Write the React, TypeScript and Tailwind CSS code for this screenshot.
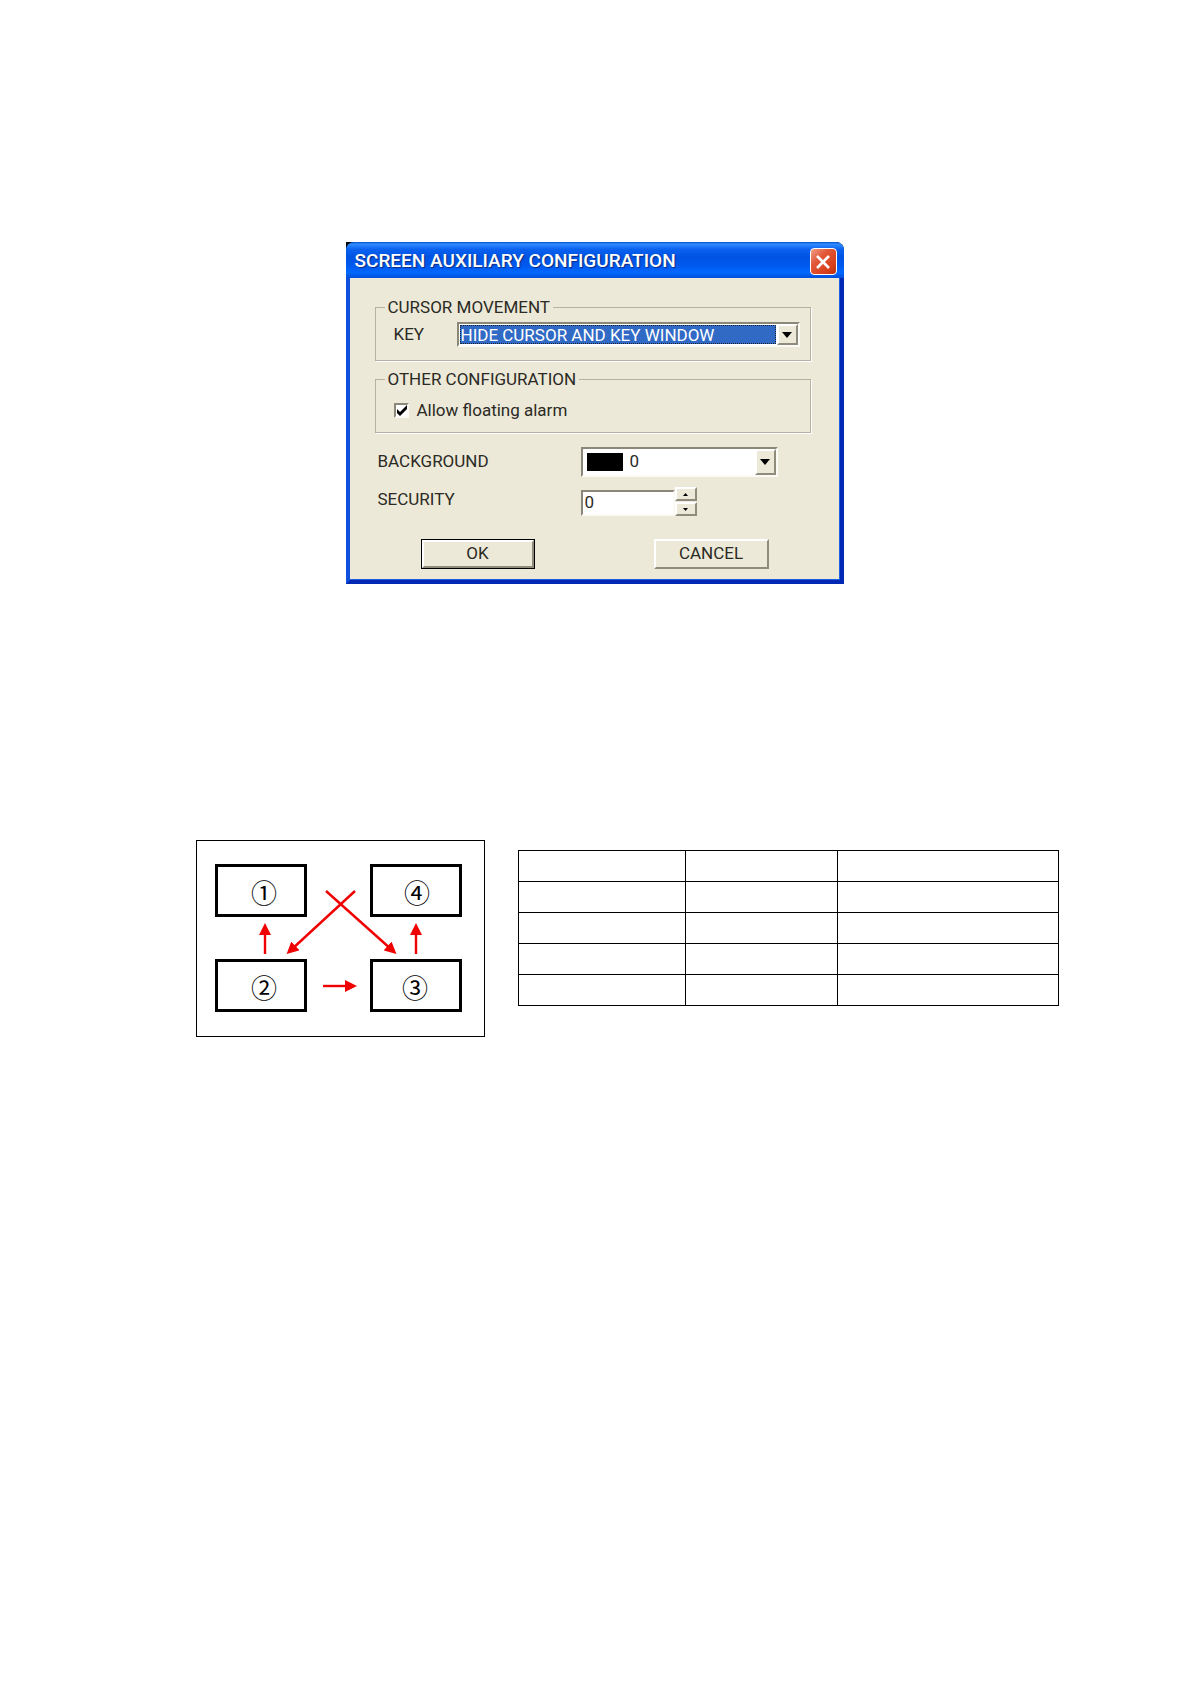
import { useState } from "react";

const raised =
  "bg-[#ece9d8] border-2 border-t-white border-l-white border-b-[#8f8c7d] border-r-[#8f8c7d]";
const sunken =
  "bg-white border-2 border-t-[#8b887a] border-l-[#8b887a] border-b-[#fbfaf5] border-r-[#fbfaf5]";

function Triangle({ up = false, small = false }: { up?: boolean; small?: boolean }) {
  return (
    <svg
      viewBox="0 0 10 6"
      className={small ? "h-[3px] w-[5px]" : "h-[6px] w-[10px]"}
      aria-hidden="true"
    >
      <path d={up ? "M0 6h10L5 0z" : "M0 0h10L5 6z"} fill="#000" />
    </svg>
  );
}

function DropArrow() {
  return (
    <span
      className={`pointer-events-none flex w-[21px] shrink-0 items-center justify-center ${raised}`}
    >
      <Triangle />
    </span>
  );
}

function TitleBar() {
  return (
    <header className="flex h-[36px] items-center justify-between rounded-t-lg bg-[linear-gradient(180deg,#0a50d0_0%,#2f8cff_6%,#0b62f0_20%,#0054e3_40%,#0058ee_65%,#0068ff_85%,#0050d8_100%)] pr-[7px] pl-[9px]">
      <h1 className="pt-[2px] text-[19px] leading-5 font-medium whitespace-nowrap text-white [text-shadow:1px_1px_1px_#0a2a80]">
        SCREEN AUXILIARY CONFIGURATION
      </h1>
      <button
        type="button"
        aria-label="Close"
        className="mt-[3px] flex size-[27px] items-center justify-center rounded border border-white bg-[linear-gradient(135deg,#f0a088_0%,#e2583a_35%,#d8401a_75%,#b83010_100%)]"
      >
        <svg viewBox="0 0 16 16" className="size-4" aria-hidden="true">
          <path d="M2 2l12 12M14 2L2 14" stroke="#fff" strokeWidth="2.6" />
        </svg>
      </button>
    </header>
  );
}

function Group({ title, children }: { title: string; children: React.ReactNode }) {
  return (
    <fieldset className="mr-[5px] h-[64px] border border-[#b5b2a3] pl-[18px] shadow-[1px_1px_0_#fff]">
      <legend className="-ml-[9px] bg-[#ece9d8] px-[3px] leading-5">{title}</legend>
      {children}
    </fieldset>
  );
}

function ConfigDialog() {
  const [floating, setFloating] = useState(true);
  const [security, setSecurity] = useState(0);

  return (
    <section className="w-[498px] max-w-full rounded-tr-lg bg-black text-[17px] leading-5 text-[#2b2a24]">
      <TitleBar />
      <form
        onSubmit={(e) => e.preventDefault()}
        className="border-4 border-t-0 border-r-[#0028b4] border-b-[#0028b4] border-l-[#0f50dc] bg-[#ece9d8] pt-[19px] pr-[24px] pb-[11px] pl-[25px] shadow-[inset_-1px_-1px_0_#2060e0]"
      >
        <Group title="CURSOR MOVEMENT">
          <div className="mt-[5px] flex items-center pr-[10px]">
            <label htmlFor="key" className="w-[63px] shrink-0 pb-[2px]">
              KEY
            </label>
            <div className={`flex h-[25px] min-w-0 flex-1 ${sunken}`}>
              <select
                id="key"
                className="m-[1px] min-w-0 flex-1 appearance-none bg-[#316ac5] pl-px leading-4 text-white outline-1 -outline-offset-1 outline-[#1c2333] outline-dotted"
              >
                <option>HIDE CURSOR AND KEY WINDOW</option>
              </select>
              <DropArrow />
            </div>
          </div>
        </Group>

        <div className="mt-2">
          <Group title="OTHER CONFIGURATION">
            <label className="mt-[11px] flex items-center gap-2">
              <span className="grid">
                <input
                  type="checkbox"
                  checked={floating}
                  onChange={(e) => setFloating(e.target.checked)}
                  className={`col-start-1 row-start-1 size-[15px] appearance-none ${sunken}`}
                />
                {floating && (
                  <svg
                    viewBox="0 0 15 15"
                    className="pointer-events-none col-start-1 row-start-1 size-[15px]"
                    aria-hidden="true"
                  >
                    <path d="M3 6v4l3 3 7-7V2L6 9z" fill="#000" />
                  </svg>
                )}
              </span>
              Allow floating alarm
            </label>
          </Group>
        </div>

        <div className="mt-[14px] flex items-center pl-[3px]">
          <label htmlFor="background" className="w-[203px] shrink-0 pb-[2px]">
            BACKGROUND
          </label>
          <div className={`flex h-[30px] w-[197px] ${sunken}`}>
            <span className="m-1 h-[18px] w-9 shrink-0 bg-black" />
            <select
              id="background"
              className="min-w-0 flex-1 appearance-none bg-white pb-[2px] pl-[3px] outline-none"
            >
              <option>0</option>
            </select>
            <DropArrow />
          </div>
        </div>

        <div className="mt-[10px] flex items-center pl-[3px]">
          <label htmlFor="security" className="w-[203px] shrink-0 pb-[6px]">
            SECURITY
          </label>
          <input
            id="security"
            value={security}
            onChange={(e) => setSecurity(Number(e.target.value) || 0)}
            className={`mt-[2px] h-[26px] w-[94px] pb-[2px] pl-[2px] outline-none ${sunken}`}
          />
          <div className="flex w-[22px] flex-col gap-px">
            <button
              type="button"
              aria-label="Increase"
              onClick={() => setSecurity(security + 1)}
              className={`flex h-[14px] items-center justify-center ${raised}`}
            >
              <Triangle up small />
            </button>
            <button
              type="button"
              aria-label="Decrease"
              onClick={() => setSecurity(Math.max(0, security - 1))}
              className={`flex h-[14px] items-center justify-center ${raised}`}
            >
              <Triangle small />
            </button>
          </div>
        </div>

        <div className="mt-[23px] flex gap-[119px] pl-[46px]">
          <button type="submit" className="h-[30px] w-[114px] border border-black">
            <span className={`flex h-full items-center justify-center pb-[2px] ${raised}`}>OK</span>
          </button>
          <button type="button" className={`h-[30px] w-[115px] pb-[2px] ${raised}`}>
            CANCEL
          </button>
        </div>
      </form>
    </section>
  );
}

const nodes = [
  { label: "①", x: 19, y: 24, cx: 68 },
  { label: "②", x: 19, y: 119, cx: 68 },
  { label: "③", x: 174, y: 119, cx: 219 },
  { label: "④", x: 174, y: 24, cx: 221 },
];

const arrows = [
  "M69 114V89",
  "M220 114V89",
  "M127 146H155",
  "M130 51L196 110",
  "M159 51L95 110",
];

function OrderDiagram() {
  return (
    <figure className="w-[289px] shrink-0 border border-black">
      <svg
        viewBox="1 1 287 195"
        className="block w-full"
        role="img"
        aria-label="Order of movement between windows"
      >
        <defs>
          <marker
            id="head"
            viewBox="0 0 12 12"
            refX="6"
            refY="6"
            markerWidth="12"
            markerHeight="12"
            markerUnits="userSpaceOnUse"
            orient="auto"
          >
            <path d="M0 0L12 6L0 12z" fill="#f00000" />
          </marker>
        </defs>
        {nodes.map((n) => (
          <g key={n.label}>
            <rect
              x={n.x + 1.5}
              y={n.y + 1.5}
              width="89"
              height="50"
              fill="#fff"
              stroke="#000"
              strokeWidth="3"
            />
            <text
              x={n.cx}
              y={n.y + 39}
              textAnchor="middle"
              className="font-['Noto_Sans_CJK_KR',sans-serif] text-[26px]"
            >
              {n.label}
            </text>
          </g>
        ))}
        {arrows.map((d) => (
          <path key={d} d={d} stroke="#f00000" strokeWidth="2.4" markerEnd="url(#head)" />
        ))}
      </svg>
    </figure>
  );
}

function OrderTable() {
  return (
    <table className="mt-[10px] min-w-0 flex-1 table-fixed border-collapse">
      <colgroup>
        <col className="w-[31%]" />
        <col className="w-[28%]" />
        <col className="w-[41%]" />
      </colgroup>
      <tbody>
        {[0, 1, 2, 3, 4].map((row) => (
          <tr key={row} className="h-[31px]">
            <td className="border border-black" />
            <td className="border border-black" />
            <td className="border border-black" />
          </tr>
        ))}
      </tbody>
    </table>
  );
}

export default function App() {
  return (
    <main className="min-h-screen bg-white pt-[242px] font-[Roboto,'Liberation_Sans',sans-serif]">
      <div className="flex justify-center pr-0.5">
        <ConfigDialog />
      </div>
      <div className="mt-64 flex items-start gap-[33px] pr-33 pl-49">
        <OrderDiagram />
        <OrderTable />
      </div>
    </main>
  );
}
